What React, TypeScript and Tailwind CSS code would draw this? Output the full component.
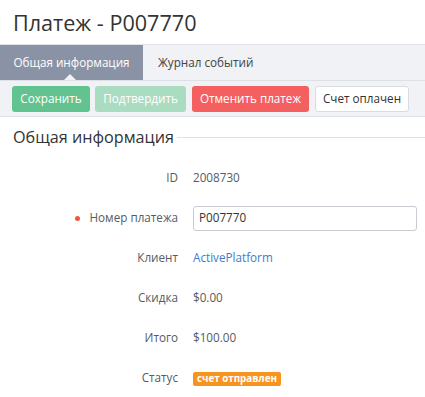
import React from "react";

const Row = ({ label, required, children }: { label: string; required?: boolean; children: React.ReactNode }) => (
  <div className="flex items-center h-[40px]">
    <div className="w-[193px] shrink-0 flex items-center justify-end pr-[15px] text-[11.7px] text-[#555b63]">
      {required && <span className="w-[5px] h-[5px] rounded-full bg-[#f05a3c] mr-[9px]" />}
      {label}
    </div>
    <div className="flex-1 text-[11.7px] text-[#555b63]">{children}</div>
  </div>
);

export default function App() {
  return (
    <div className="w-[425px] h-[397px] bg-white overflow-hidden" style={{ fontFamily: '"Open Sans", "Noto Sans", sans-serif' }}>
      <div className="h-[44px] pl-[13px] flex items-center">
        <h1 className="text-[21.6px] leading-none text-[#333] mt-[1px]">Платеж - P007770</h1>
      </div>
      <div className="bg-[#f0f2f5] border-t border-[#dfe3e8]">
        <div className="flex h-[36px] border-b border-[#dde1e6]">
          <div className="relative w-[143px] bg-[#8a93a5] text-white text-[11.7px] flex items-center justify-center">
            Общая информация
            <span className="absolute left-[64px] bottom-0 w-0 h-0 border-l-[6px] border-r-[6px] border-b-[6px] border-l-transparent border-r-transparent border-b-[#f0f2f5]" />
          </div>
          <div className="px-[15px] text-[11.7px] text-[#444] flex items-center">Журнал событий</div>
        </div>
        <div className="h-[36px] flex items-center pl-[12px] gap-[5px] border-b border-[#dde1e6]">
          <button className="h-[26px] w-[78px] rounded-[3px] bg-[#62c390] text-white text-[11.7px]">Сохранить</button>
          <button className="h-[26px] w-[91px] rounded-[3px] bg-[#aadcc2] text-white text-[11.7px]">Подтвердить</button>
          <button className="h-[26px] w-[117px] rounded-[3px] bg-[#f45f5f] text-white text-[11.7px] ml-[1px]">Отменить платеж</button>
          <button className="h-[26px] w-[94px] rounded-[3px] bg-white border border-[#d8dce2] text-[#333] text-[11.7px] ml-[1px]">Счет оплачен</button>
        </div>
      </div>
      <div className="flex items-center pl-[13px] mt-[12px]">
        <span className="text-[16.2px] text-[#333] leading-none">Общая информация</span>
        <div className="flex-1 h-px bg-[#dde1e6] ml-[3px] mt-[1px]" />
      </div>
      <div className="mt-[13px]">
        <Row label="ID">2008730</Row>
        <Row label="Номер платежа" required>
          <div className="w-[224px] h-[25px] border border-[#c8ccd2] rounded-[3px] flex items-center px-[5px] text-[11.7px] text-[#333]">P007770</div>
        </Row>
        <Row label="Клиент"><span className="text-[#3d7cc9]">ActivePlatform</span></Row>
        <Row label="Скидка">$0.00</Row>
        <Row label="Итого">$100.00</Row>
        <Row label="Статус">
          <span className="inline-flex items-center h-[14px] px-[4px] rounded-[2px] bg-[#f7941d] text-white text-[9.8px] font-bold leading-none -mt-[2px]">счет отправлен</span>
        </Row>
      </div>
    </div>
  );
}
